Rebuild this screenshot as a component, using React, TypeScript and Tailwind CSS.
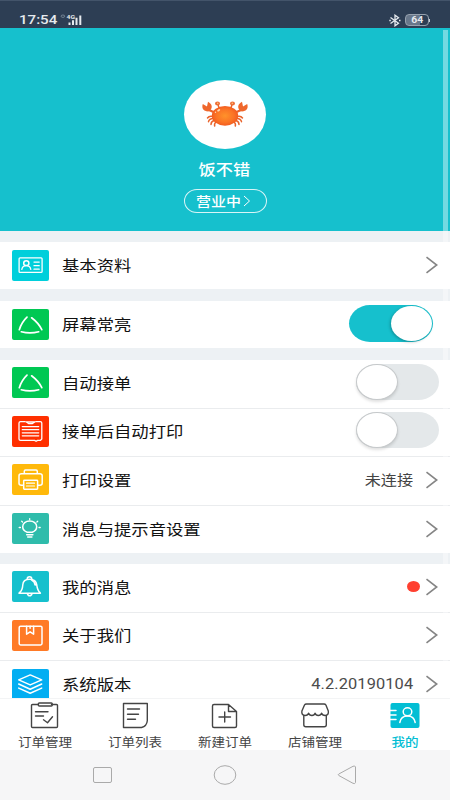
import React from 'react';

type Kids = { children?: React.ReactNode };

const Glyph = ({ bg, children }: { bg: string } & Kids) => (
  <div className={`h-[31px] w-[37px] shrink-0 overflow-hidden rounded-[2px] ${bg}`}>
    <svg width="37" height="31" viewBox="0 0 37 31" fill="none" stroke="#fff" strokeWidth="1.5" strokeLinecap="round" strokeLinejoin="round">
      {children}
    </svg>
  </div>
);

const IdIcon = () => (
  <Glyph bg="bg-[#00cfdb]">
    <rect x="7.1" y="7.8" width="23" height="14.6" rx="1" strokeWidth="1.3" />
    <ellipse cx="14.3" cy="13.2" rx="2.6" ry="2.4" />
    <path d="M9.8 19.4c.5-2.2 2.2-3.7 4.5-3.7s4 1.5 4.5 3.7M22 12.1h5.2M22 15.7h5.2M22 19.2h5.2" strokeWidth="1.3" />
  </Glyph>
);

const TriangleIcon = () => (
  <Glyph bg="bg-[#00c853]">
    <path d="M7.3 20.7C8.8 16 11.4 11.6 15 8.2M19.6 8.800c4 3 7.800 7 10.200 11.900M9.300 22.800c5.600 1.500 11.800 1.500 17.400 0" strokeWidth="1.700" />
  </Glyph>
);

const ReceiptIcon = () => (
  <Glyph bg="bg-[#ff3000]">
    <path d="M13 5.600H8.600Q7 5.600 7 7v16q0 1.400 1.600 1.400h14l1.500.9 1.500-.9h2.700l1.500-1.300V7q0-1.400-1.600-1.400H24M14 5.800h9.200l-2.700 1.700h-4z" strokeWidth="1.300" />
    <path d="M10.300 10.600h16.400M10.300 13.700h16.400M10.300 16.800h16.400M10.300 19.800h16.400" strokeWidth="1.300" />
  </Glyph>
);

const PrinterIcon = () => (
  <Glyph bg="bg-[#ffb90b]">
    <path d="M12.300 9.600V7.200q0-1.200 1.200-1.200h10.600q1.200 0 1.200 1.200v2.400M11.400 21.300H9.500q-2.500 0-2.500-2v-7.500q0-2 2.500-2h18.200q2.500 0 2.500 2v7.500q0 2-2.500 2h-2" />
    <rect x="11.700" y="16.200" width="13.900" height="9" rx=".7" />
    <path d="M14.500 19.200h8M14.500 22h8" strokeWidth="1.200" />
  </Glyph>
);

const BulbIcon = () => (
  <Glyph bg="bg-[#2fbcab]">
    <path d="M15.200 19.200c-2.700-1-4.500-3-4.500-5.500 0-3.300 3-5.700 7-5.700s7 2.400 7 5.700c0 2.500-1.800 4.500-4.500 5.500zM14.700 21.700h6.200M15.700 24h4.200" />
    <path d="M17.700 5.700v.9M7.200 14.500h1.200M27 14.500h1.200M9.700 8.300l.8.700M25.700 8.300l-.8.700" strokeWidth="1.300" />
  </Glyph>
);

const BellIcon = () => (
  <Glyph bg="bg-[#16c0cd]">
    <path d="M7 22.300h21.400M7.300 21.700c2.500-1.600 3.300-4.200 3.500-8 .2-3.500 3-5.500 6.700-5.500s6.800 2 7.200 5.500c.5 4 1 6.300 3.400 8M15.200 8c0-1.500.9-2.300 2.300-2.300s2.300.8 2.300 2.300M15.400 22.500c.3 1.500 1.100 2.200 2.300 2.200s2-.7 2.300-2.200" />
    <path d="M20 9.300c2.200 1 3 2.600 3.200 4.600" strokeWidth="1.800" />
  </Glyph>
);

const BoxIcon = () => (
  <Glyph bg="bg-[#ff7a26]">
    <rect x="7.200" y="6.200" width="22.800" height="18.800" rx="1.400" />
    <path d="M14.600 6.200v8l3.500-2.400 3.500 2.400v-8M18.100 6.200v2" />
  </Glyph>
);

const LayersIcon = () => (
  <Glyph bg="bg-[#03aef2]">
    <path d="M18.200 5.900l11.500 5-11.500 5-11.500-5zM6.700 15l11.500 5.200L29.700 15M6.700 19.100l11.500 5.200 11.500-5.200" />
  </Glyph>
);

const Arrow = () => (
  <svg className="shrink-0" width="13" height="18" viewBox="0 0 13 18" fill="none" stroke="#858585" strokeWidth="1.6">
    <path d="M1.500 1.200L11.700 9 1.500 16.800" />
  </svg>
);

const Switch = ({ on }: { on?: boolean }) => (
  <div className={`mb-[2px] flex items-center ${on ? 'h-[37px] w-[84px] justify-end rounded-[21px/18.5px] bg-[#16c0cd] px-px' : 'h-9 w-[83px] rounded-[21px/18px] bg-[#e4e8ea]'}`}>
    <div className={`rounded-[50%] bg-white ${on ? 'h-[35px] w-[41px] shadow-[-1px_1px_3px_rgba(0,0,0,0.25)]' : 'h-9 w-[42px] border border-[#c6c9cb] shadow-[0_2px_3px_rgba(0,0,0,0.12)]'}`} />
  </div>
);

type RowProps = { icon: React.ReactNode; label: string; pad?: string; line?: boolean } & Kids;

const Row = ({ icon, label, pad = 'pr-3', line, children }: RowProps) => (
  <div className={`flex shrink-0 items-center bg-white pl-[12px] ${pad} ${line ? 'h-[48.5px] border-b border-[#eaecee] pb-[2px]' : 'h-[47px] pb-px'}`}>
    {icon}
    <span className="ml-[13px] origin-left scale-x-[1.155] whitespace-nowrap text-[15px] leading-5 text-[#111]">{label}</span>
    <div className="ml-auto flex items-center">{children}</div>
  </div>
);

const Tab = ({ label, active, children }: { label: string; active?: boolean } & Kids) => (
  <div className={`flex w-[90px] flex-col items-center ${active ? 'text-[#03bed4]' : 'text-[#444]'}`}>
    <svg className="mt-[3px] shrink-0" width="32" height="28" viewBox="0 0 32 28" fill="none" stroke="currentColor" strokeWidth="1.4" strokeLinecap="round" strokeLinejoin="round">
      {children}
    </svg>
    <span className={`mt-[4px] h-4 scale-x-[1.13] whitespace-nowrap text-[12px] leading-[18px] ${active ? 'font-medium' : ''}`}>{label}</span>
  </div>
);

const Crab = () => (
  <svg width="48" height="28" viewBox="0 0 48 28" fill="none">
    <defs>
      <radialGradient id="shell" cx=".5" cy=".5" r=".6">
        <stop offset="0" stopColor="#ff922a" />
        <stop offset=".55" stopColor="#fb7426" />
        <stop offset="1" stopColor="#ee4f1c" />
      </radialGradient>
    </defs>
    <g stroke="#e9632b" strokeWidth="1.500" strokeLinecap="round">
      <path d="M12 15.500c-2.500-.8-4.500 0-5.500 1.500M12 17.500c-2.500 0-4 1-4.500 3.200M13 19.500c-2 .7-3 2-3 4M15 21c-1.300 1-1.800 2.300-1.300 4" />
      <path d="M36 15.500c2.500-.8 4.500 0 5.500 1.500M36 17.500c2.500 0 4 1 4.500 3.200M35 19.500c2 .7 3 2 3 4M33 21c1.300 1 1.800 2.300 1.300 4" />
      <path d="M18.500 8.500L17 3.500M29.500 8.500L31 3.500" />
      <path d="M13.500 11.500L7 8.500M34.500 11.500L41 8.500" strokeWidth="2" />
    </g>
    <path d="M8.500 10.300C3 11 .2 7.500 1.800 3L6 5.500 7 .8c4.200 2.200 5.200 5.700 1.500 9.500zM39.500 10.300c5.500.7 8.300-2.800 6.700-7.300L42 5.500 41 .8c-4.200 2.200-5.200 5.700-1.500 9.500z" fill="#ef672c" />
    <ellipse cx="24" cy="14.800" rx="13.200" ry="9.900" fill="url(#shell)" />
    <ellipse cx="16.500" cy="2.500" rx="2.500" ry="2.100" fill="#ee6d35" />
    <ellipse cx="31.500" cy="2.500" rx="2.500" ry="2.100" fill="#ee6d35" />
    <circle cx="16.700" cy="2.300" r=".8" fill="#ffc47f" />
    <circle cx="31.300" cy="2.300" r=".8" fill="#ffc47f" />
    <ellipse cx="17.700" cy="9.300" rx="1.600" ry="1" fill="#ffd8b5" transform="rotate(-25 17.700 9.300)" />
    <circle cx="14.500" cy="11.200" r=".7" fill="#ffd8b5" />
  </svg>
);

const StatusBar = () => (
  <div className="flex h-7 shrink-0 items-center border-t border-[#43546a] bg-[#2d3e54] pr-5 pl-[19px] pt-[11px] text-[#e6eaee]">
    <span className="w-[33px] origin-left scale-x-[1.16] font-[Roboto] text-[13px] leading-4 font-medium">17:54</span>
    <svg className="ml-[8px]" width="23" height="14" viewBox="0 0 23 14">
      <ellipse cx="2.900" cy="3.200" rx="1.800" ry="1.200" fill="none" stroke="#8290a0" strokeWidth=".8" />
      <text x="6.500" y="5.800" fontSize="6" fontWeight="700" fill="#e6eaee" textLength="8.500" lengthAdjust="spacingAndGlyphs" fontFamily="Roboto, sans-serif">4G</text>
      <path d="M8.500 9.500h2V12h-2zM12 7.200h2V12h-2zM15.500 4.800h2V12h-2zM19.300 2.400h2V12h-2z" fill="#e6eaee" />
    </svg>
    <svg className="ml-auto" width="12" height="13" viewBox="0 0 12 13" fill="none" stroke="#e6eaee" strokeWidth="1.300">
      <path d="M1.500 3.500l8 5.700L6 11.800V1.200L9.500 3.800l-8 5.700" />
      <path d="M.3 6.500h1.500M10 6.500h1.500" strokeWidth="1.400" />
    </svg>
    <div className="ml-[4px] flex h-[12px] w-[24px] items-center justify-center rounded-[4px] border border-[#96a1ae] bg-[linear-gradient(90deg,#68778a_62%,#2d3e54_62%)] font-[Roboto] text-[9px] leading-none font-bold">
      <span className="scale-x-[1.15]">64</span>
    </div>
    <div className="h-[3px] w-px bg-[#c4cbd2]" />
  </div>
);

export default function App() {
  return (
    <div className="relative flex h-[800px] w-[450px] flex-col overflow-hidden bg-[#edf1f4] font-['Noto_Sans','Noto_Sans_CJK_SC',sans-serif]">
      <StatusBar />
      <header className="flex h-[203px] shrink-0 flex-col items-center bg-[#16c0cd] pt-[52px] text-white">
        <div className="flex h-[69px] w-[82px] items-center justify-center rounded-[50%] bg-white">
          <Crab />
        </div>
        <div className="mt-[9px] scale-x-[1.15] text-[15px] leading-[22px] font-medium">饭不错</div>
        <div className="mt-[9px] flex h-[24px] w-[83px] items-center justify-center rounded-[13px/12px] border border-[#d9f5f7]">
          <span className="mr-[5px] scale-x-[1.15] text-[13px] leading-5 font-medium">营业中</span>
          <svg width="8" height="12" viewBox="0 0 8 12" fill="none" stroke="#fff" strokeWidth="1">
            <path d="M1 1l5.500 5L1 11" />
          </svg>
        </div>
      </header>

      <main className="flex h-[467px] shrink-0 flex-col overflow-hidden pt-[11px]">
        <Row icon={<IdIcon />} label="基本资料"><Arrow /></Row>
        <div className="h-3 shrink-0" />
        <Row icon={<TriangleIcon />} label="屏幕常亮" pad="pr-[17px]"><Switch on /></Row>
        <div className="h-3 shrink-0" />
        <Row icon={<TriangleIcon />} label="自动接单" pad="pr-[11px]" line><Switch /></Row>
        <Row icon={<ReceiptIcon />} label="接单后自动打印" pad="pr-[11px]" line><Switch /></Row>
        <Row icon={<PrinterIcon />} label="打印设置" line>
          <span className="mr-3 origin-right scale-x-[1.15] text-[14px] leading-5 text-[#444]">未连接</span>
          <Arrow />
        </Row>
        <Row icon={<BulbIcon />} label="消息与提示音设置"><Arrow /></Row>
        <div className="h-[11.5px] shrink-0" />
        <Row icon={<BellIcon />} label="我的消息" line>
          <i className="mr-[5px] h-[11px] w-[13px] rounded-[50%] bg-[#ff4030]" />
          <Arrow />
        </Row>
        <Row icon={<BoxIcon />} label="关于我们" line><Arrow /></Row>
        <Row icon={<LayersIcon />} label="系统版本">
          <span className="mr-3 origin-right scale-x-[1.17] font-[Roboto] text-[14px] leading-5 tracking-[0.100px] text-[#4c4c4c]">4.2.20190104</span>
          <Arrow />
        </Row>
      </main>
      <div className="absolute top-[30px] left-[443px] h-[667px] w-[5px] bg-white/40" />

      <nav className="flex h-[52px] shrink-0 border-t border-[#f3f4f5] bg-white">
        <Tab label="订单管理">
          <path d="M9.500 2.500H3.500q-1 0-1 1v21q0 1 1 1h24q1 0 1-1v-21q0-1-1-1h-5" />
          <rect x="9.300" y="1" width="14" height="3" rx="1" />
          <path d="M6.500 9.800h12.500M6.500 14h8M14.500 17.800l4 3 5-6" />
        </Tab>
        <Tab label="订单列表">
          <path d="M4.500 1.500h23.800v17.200q-.5 5.500-5.800 6.800h-18z" />
          <path d="M8.500 7h12M8.500 12.300h11M8.500 17.300h8" />
        </Tab>
        <Tab label="新建订单">
          <path d="M5 2.500h14.500l8 7V24q0 1.500-1.500 1.500H5q-1.500 0-1.500-1.500V4q0-1.500 1.500-1.500zM19.500 2.500v7h8M10 15h11.500M15.700 10v10" />
        </Tab>
        <Tab label="店铺管理">
          <path d="M7.500 2h17.500q1.300 0 1.900 1l2.400 6q.7 4.300-3.200 4.500-2.800 0-3.500-2.300-.8 2.300-3.300 2.300t-3.200-2.300q-.7 2.300-3.200 2.300t-3.300-2.300q-.7 2.300-3.500 2.300-3.900-.2-3.200-4.500l2.600-6q.6-1 2-1z" />
          <path d="M4.800 13.500v9.300q0 2 2 2h18.500q2 0 2-2v-9.300" />
        </Tab>
        <Tab label="我的" active>
          <rect x="1.500" y="1" width="29" height="25" rx="2" fill="currentColor" stroke="none" />
          <g stroke="#fff" strokeWidth="1.500">
            <path d="M1 8.500h6M1 13h6M1 17.500h6" />
            <ellipse cx="18.500" cy="9.800" rx="4.300" ry="4" />
            <path d="M10.800 20.500c.7-4 3.800-6.500 7.700-6.500s7 2.500 7.700 6.500" />
          </g>
        </Tab>
      </nav>

      <footer className="flex h-[50px] shrink-0 items-center justify-between bg-[#f6f6f7] px-[90px]">
        <svg width="24" height="24" viewBox="0 0 24 24" fill="none" stroke="#aaa" strokeWidth="1">
          <rect x="3.500" y="4.500" width="18" height="15" rx="1.500" />
        </svg>
        <svg width="24" height="24" viewBox="0 0 24 24" fill="none" stroke="#aaa" strokeWidth="1">
          <ellipse cx="12" cy="12" rx="10.800" ry="9.300" />
        </svg>
        <svg width="24" height="24" viewBox="0 0 24 24" fill="none" stroke="#aaa" strokeWidth="1" strokeLinejoin="round">
          <path d="M2.800 11L17 3.300q2-1 2.500.7v15.500q-.5 1.800-2.500.8L2.800 12.500q-1.200-.7 0-1.500z" />
        </svg>
      </footer>
    </div>
  );
}
